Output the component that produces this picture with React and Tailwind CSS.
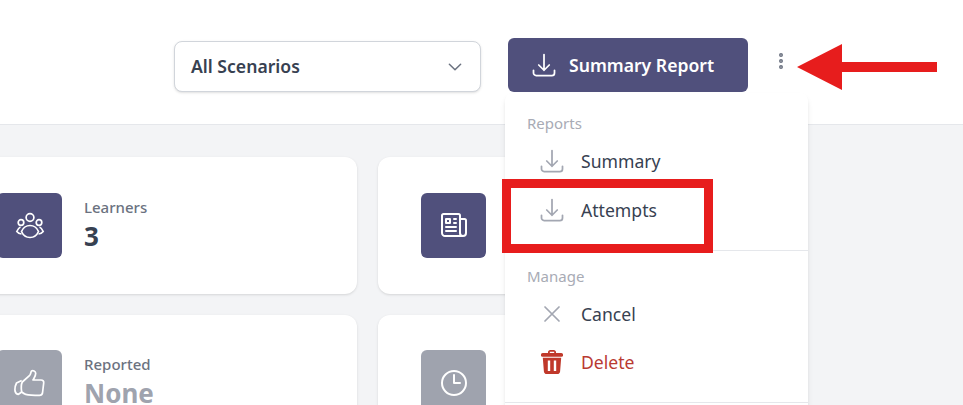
import {
  HiOutlineArrowDownTray,
  HiOutlineChevronDown,
  HiOutlineClock,
  HiOutlineEllipsisVertical,
  HiOutlineNewspaper,
  HiOutlineXMark,
} from 'react-icons/hi2';

function LearnersIcon() {
  return (
    <svg viewBox="0 0 30 27" width="30" height="27" fill="none" stroke="currentColor" strokeWidth="1.7">
      <circle cx="15" cy="5.5" r="3.9" />
      <circle cx="6" cy="10.5" r="2.8" />
      <circle cx="24" cy="10.5" r="2.8" />
      <path d="M15 13.500C19 13.500 22 16 23.500 19.500C22 23 19 25.500 15 25.500C11 25.500 8 23 6.500 19.500C8 16 11 13.500 15 13.500Z" />
      <path d="M5.500 15C4 15.500 2.700 17.500 1.800 19.500C3 21 4.500 21.800 6.500 22" />
      <path d="M24.500 15C26 15.500 27.300 17.500 28.200 19.500C27 21 25.500 21.800 23.500 22" />
    </svg>
  );
}

function ThumbIcon() {
  return (
    <svg viewBox="0 0 31 28" width="31" height="28" fill="none" stroke="currentColor" strokeWidth="1.7" strokeLinejoin="round">
      <path d="M8.300 13L15.700 6.300C16.800 5 16.800 3 17.500 2C19 1.300 21.500 2 21.700 4.300C21.800 7 20 9 19 11H27C29 11 30 12.300 29.700 14L28.500 24C28.200 25.500 27 26.300 25.500 26.300C21 26.300 16 26.300 11.700 25.300C10 24.900 8.800 24 7.700 23C7 19 7.300 15 8.300 13Z" />
      <path d="M7.700 11.500L2.500 14C1.500 16 0.800 20 1 22C1.500 24 3 25.300 4.500 25.300L7.700 23" />
    </svg>
  );
}

function TrashIcon({ className }) {
  return (
    <svg viewBox="0 0 22 24" className={className} fill="currentColor">
      <path d="M7 3.500V2.200C7 1 8 0 9.200 0h3.600C14 0 15 1 15 2.200v1.300h-1.800V1.800H8.800v1.700z" />
      <rect x="0" y="3" width="22" height="3.800" rx="1.600" />
      <path fillRule="evenodd" d="M1.800 7.800h18.400l-1.100 13.600c-.1 1.500-1.200 2.600-2.700 2.600H5.600c-1.500 0-2.600-1.100-2.700-2.600zM6.800 10.500v10.500h2.400V10.500zM12.800 10.500v10.500h2.400V10.500z" />
    </svg>
  );
}

function NewsIcon() {
  return <HiOutlineNewspaper className="w-8 h-8" />;
}

function ClockIcon() {
  return <HiOutlineClock className="w-8 h-8" />;
}

function StatCard({ icon: Icon, label, value, muted }) {
  return (
    <div className="h-[136.6px] bg-white rounded-xl shadow-sm flex items-start pt-[35.8px] pl-[43px]">
      <div className={`w-[65px] h-[65px] rounded-md flex items-center justify-center text-white ${muted ? 'bg-[#9fa3ae]' : 'bg-[#50507c]'}`}>
        <Icon />
      </div>
      <div className="ml-[22px] pt-[4px]">
        <div className="text-[15px] leading-5 font-medium text-[#6b7280]">{label}</div>
        <div className={`mt-[1px] text-[26px] leading-9 font-bold ${muted ? 'text-[#9fa3ae]' : 'text-[#374151]'}`}>{value}</div>
      </div>
    </div>
  );
}

function MenuItem({ icon: Icon, children, danger, iconClass = 'w-7 h-7' }) {
  return (
    <div className={`h-[48.5px] flex items-center pl-[33px] text-[17.6px] ${danger ? 'text-[#b93a32]' : 'text-[#374151]'}`}>
      <div className={`w-7 flex justify-center ${danger ? 'text-[#c0392b]' : 'text-[#a3a7b2]'}`}>
        <Icon className={iconClass} />
      </div>
      <span className="ml-[15px]">{children}</span>
    </div>
  );
}

export default function App() {
  return (
    <div className="relative h-[405px] overflow-hidden bg-[#f3f4f6] font-['Noto_Sans',sans-serif]">
      <header className="h-[125px] bg-white border-b border-[#e5e7eb] flex justify-end items-start pt-[38px] pr-[170px]">
        <div className="mt-[3px] w-[307px] h-[51px] bg-white border border-[#d1d5db] rounded-lg shadow-sm flex items-center justify-between pl-4 pr-4 text-[17.6px] font-semibold text-[#374151]">
          All Scenarios
          <HiOutlineChevronDown className="w-[18px] h-[18px] text-[#6b7280]" strokeWidth={2} />
        </div>
        <button className="ml-[27px] w-[240px] h-[54px] bg-[#50507c] rounded-md flex items-center pl-[22px] gap-[11px] text-white text-[17.6px] font-semibold">
          <HiOutlineArrowDownTray className="w-7 h-7" />
          Summary Report
        </button>
        <div className="ml-[21px] pt-[11px] text-[#6b7280]">
          <HiOutlineEllipsisVertical className="w-6 h-6" strokeWidth={2.5} />
        </div>
      </header>

      <main className="grid grid-cols-[403px_403px] gap-[21px] ml-[-46px] pt-[32px]">
        <StatCard icon={LearnersIcon} label="Learners" value="3" />
        <StatCard icon={NewsIcon} label="Scenarios" value="1" />
        <StatCard icon={ThumbIcon} label="Reported" value="None" muted />
        <StatCard icon={ClockIcon} label="Duration" value="None" muted />
      </main>

      {/* Dropdown */}
      <div className="absolute left-[505px] top-[93px] w-[303px] h-[340px] bg-white rounded-lg shadow-md">
        <div className="pt-[20px] pb-[16px] border-b border-[#e5e7eb]">
          <div className="pl-[22px] text-[15px] leading-5 text-[#a8abb5]">Reports</div>
          <div className="mt-[4px]">
            <MenuItem icon={HiOutlineArrowDownTray}>Summary</MenuItem>
            <MenuItem icon={HiOutlineArrowDownTray}>Attempts</MenuItem>
          </div>
        </div>
        <div className="pt-[15px] pb-[16px] border-b border-[#e5e7eb]">
          <div className="pl-[22px] text-[15px] leading-5 text-[#a8abb5]">Manage</div>
          <div className="mt-[4px]">
            <MenuItem icon={HiOutlineXMark}>Cancel</MenuItem>
            <div className="-mt-[1px]">
              <MenuItem icon={TrashIcon} iconClass="w-[22px] h-6" danger>Delete</MenuItem>
            </div>
          </div>
        </div>
      </div>

      {/* Annotations */}
      <div className="absolute left-[502px] top-[179px] w-[211px] h-[74px] border-[9px] border-[#e71d1d]" />
      <svg className="absolute left-[797px] top-[44px]" width="141" height="46" viewBox="0 0 141 46">
        <polygon points="0,23 45,0 45,18 140,18 140,28 45,28 45,46" fill="#e71d1d" />
      </svg>
    </div>
  );
}
